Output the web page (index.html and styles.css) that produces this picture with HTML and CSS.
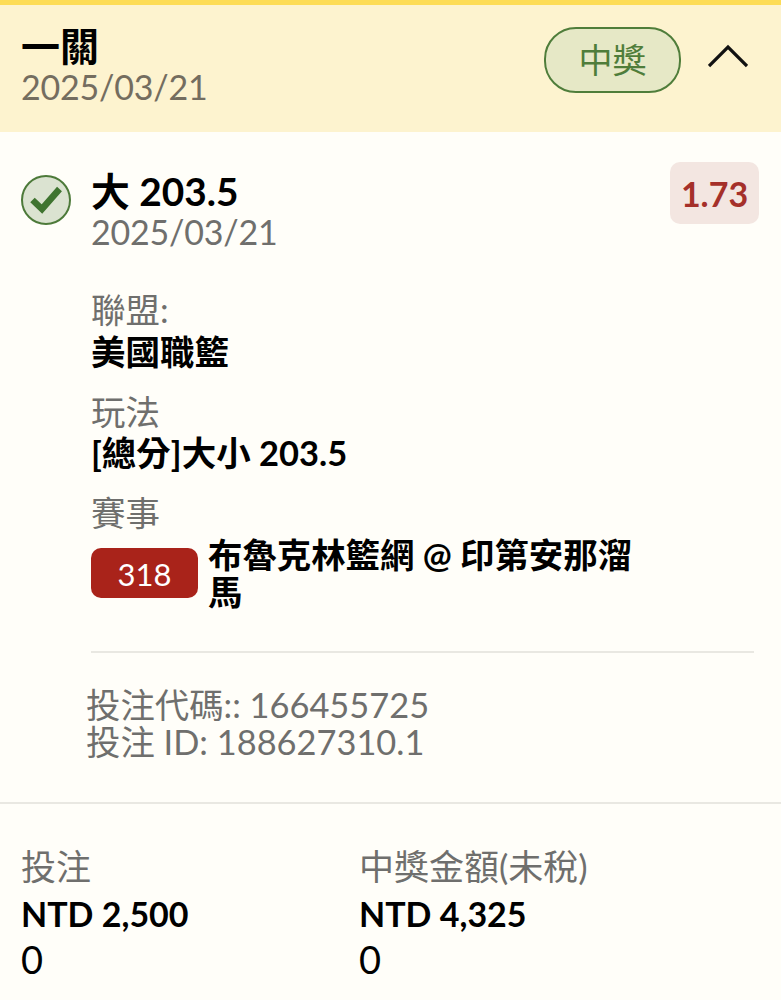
FILE: index.html
```html
<!DOCTYPE html>
<html lang="zh-Hant">
<head>
  <meta charset="UTF-8" />
  <title>投注</title>
  <link rel="stylesheet" href="styles.css">
</head>
<body>
  <div class="card">
    <div class="card-head">
      <div class="head-text">
        <div class="head-title">一關</div>
        <div class="head-date">2025/03/21</div>
      </div>
      <span class="status-pill">中獎</span>
      <svg class="chevron" width="40" height="24" viewBox="0 0 40 24">
        <path d="M1 22 L20 3 L39 22" fill="none" stroke="#111" stroke-width="3.2" />
      </svg>
    </div>

    <div class="leg">
      <svg class="check" width="52" height="52" viewBox="0 0 52 52">
        <circle cx="26" cy="26" r="24" fill="#dbe3d1" stroke="#4d7a3a" stroke-width="2" />
        <path d="M12.5 26 L22 35 L39.5 15" fill="none" stroke="#3f7430" stroke-width="6.5" />
      </svg>
      <div class="leg-body">
        <div class="leg-top">
          <div>
            <div class="leg-title">大 203.5</div>
            <div class="leg-date">2025/03/21</div>
          </div>
          <span class="odds">1.73</span>
        </div>

        <div class="field field-first">
          <div class="field-label">聯盟:</div>
          <div class="field-value">美國職籃</div>
        </div>
        <div class="field">
          <div class="field-label">玩法</div>
          <div class="field-value">[總分]大小 203.5</div>
        </div>
        <div class="field">
          <div class="field-label">賽事</div>
          <div class="match">
            <span class="match-no">318</span>
            <div class="match-name">布魯克林籃網 @ 印第安那溜馬</div>
          </div>
        </div>
      </div>
    </div>

    <div class="codes">
      <div>投注代碼:: 166455725</div>
      <div>投注 ID: 188627310.1</div>
    </div>

    <div class="totals">
      <div class="total">
        <div class="field-label">投注</div>
        <div class="total-amount">NTD 2,500</div>
        <div class="total-zero">0</div>
      </div>
      <div class="total">
        <div class="field-label">中獎金額(未稅)</div>
        <div class="total-amount">NTD 4,325</div>
        <div class="total-zero">0</div>
      </div>
    </div>
  </div>
</body>
</html>
```

FILE: styles.css
```css
body {
  margin: 0;
  background: #fffef9;
  font-family: Lato, "Noto Sans CJK TC", sans-serif;
  color: #000;
}
.card {
  height: 1000px;
  overflow: hidden;
  border-top: 5px solid #fddc56;
  box-sizing: border-box;
}
.card-head {
  display: flex;
  align-items: flex-start;
  height: 127px;
  padding: 19px 33px 0 21px;
  box-sizing: border-box;
  background: #fdf3cf;
}
.head-text {
  flex: 1;
}
.head-title {
  font-size: 39px;
  font-weight: 700;
  line-height: 44px;
}
.head-date {
  font-size: 34px;
  letter-spacing: -0.2px;
  line-height: 37px;
  color: #746d5f;
}
.status-pill {
  width: 133px;
  height: 62px;
  margin-top: 3px;
  border: 2px solid #4f7d3a;
  border-radius: 32px;
  background: #e6e8c6;
  color: #4f7d3a;
  font-size: 34px;
  line-height: 62px;
  text-align: center;
}
.chevron {
  margin: 20px 0 0 27px;
}
.leg {
  display: flex;
  padding: 30px 27px 0 20px;
}
.check {
  flex: none;
  margin: 12px 19px 0 0;
}
.leg-body {
  flex: 1;
  padding-bottom: 41px;
  border-bottom: 2px solid #e9e8e2;
}
.leg-top {
  display: flex;
  justify-content: space-between;
  margin-right: -5px;
}
.leg-title {
  margin-top: 8px;
  font-size: 38.8px;
  font-weight: 700;
  line-height: 43px;
}
.leg-date {
  font-size: 34px;
  letter-spacing: -0.2px;
  line-height: 37px;
  color: #6f6f6d;
}
.odds {
  width: 89px;
  height: 62px;
  border-radius: 10px;
  background: #f3e6e1;
  color: #a5302a;
  font-size: 34px;
  font-weight: 700;
  line-height: 64px;
  text-align: center;
}
.field {
  margin-top: 19px;
}
.field-first {
  margin-top: 39px;
}
.field-first .field-value {
  margin-top: 1px;
}
.field-label {
  font-size: 34.5px;
  line-height: 42px;
  color: #6f6f6d;
}
.field-value {
  font-size: 34.5px;
  font-weight: 700;
  line-height: 40px;
}
.match {
  display: flex;
  align-items: center;
  gap: 10px;
  margin-top: 2px;
}
.match-no {
  flex: none;
  width: 107px;
  height: 50px;
  border-radius: 10px;
  background: #a9231a;
  color: #fff;
  font-size: 31px;
  line-height: 52px;
  text-align: center;
}
.match-name {
  width: 430px;
  font-size: 34.4px;
  font-weight: 700;
  line-height: 37px;
}
.codes {
  padding: 33px 0 42px 86px;
  border-bottom: 2px solid #e9e8e2;
  font-size: 34.4px;
  line-height: 37px;
  color: #6f6f6d;
}
.totals {
  display: flex;
  padding: 41px 0 0 21px;
}
.total {
  width: 338px;
}
.total .field-label {
  font-size: 35px;
}
.total-amount {
  margin-top: 4px;
  font-size: 34px;
  font-weight: 700;
  line-height: 46px;
}
.total-zero {
  font-size: 38px;
  line-height: 44px;
}
```
